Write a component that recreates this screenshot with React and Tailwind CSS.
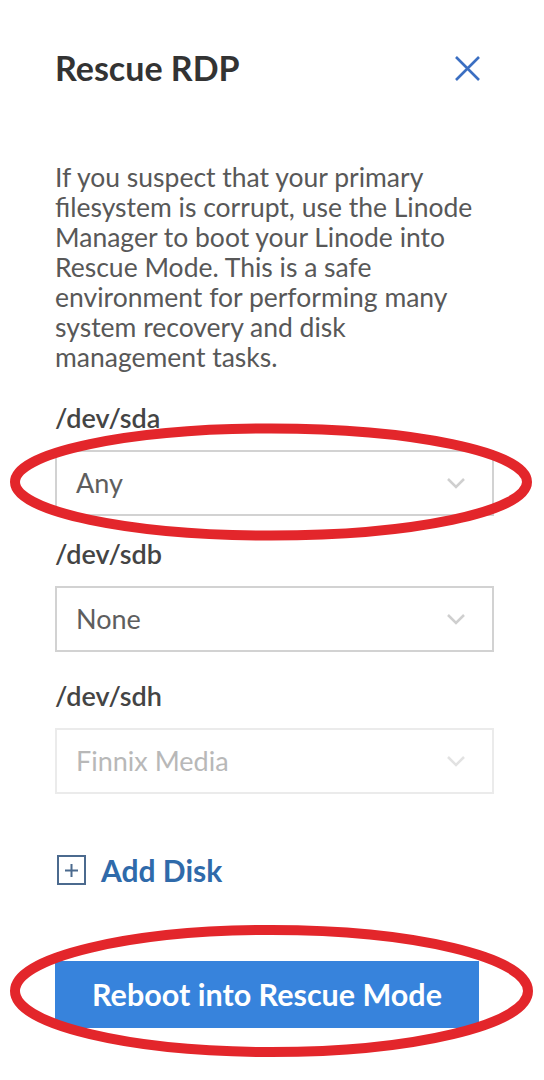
import React from 'react';

const font = { fontFamily: 'Lato, "Open Sans", sans-serif' };

const Chevron = ({ muted }) => (
  <svg width="20" height="12" viewBox="0 0 20 12" fill="none">
    <path d="M2 2l8 8 8-8" stroke={muted ? '#e2e2e2' : '#cfcfcf'} strokeWidth="2.5" />
  </svg>
);

const DiskSelect = ({ label, value, disabled, gap }) => (
  <div className={gap}>
    <div className="text-[27px] leading-[30px] font-semibold text-[#444]">{label}</div>
    <div
      className={`mt-[17px] h-[66px] flex items-center justify-between pl-[19px] pr-[26px] bg-white border-2 ${
        disabled ? 'border-[#ebebeb] text-[#b8b8b8]' : 'border-[#d2d2d2] text-[#5e5e5e]'
      }`}
    >
      <span className="text-[27px]">{value}</span>
      <Chevron muted={disabled} />
    </div>
  </div>
);

export default function App() {
  return (
    <div className="relative w-[544px] h-[1080px] bg-white overflow-hidden" style={font}>
      <div className="pl-[55px] pr-[50px] pt-[48px]">
        <div className="flex items-center justify-between pr-[13px]">
          <h1 className="text-[34px] leading-[40px] font-bold text-[#333]">Rescue RDP</h1>
          <svg width="27" height="27" viewBox="0 0 27 27" fill="none">
            <path d="M2 2l23 23M25 2L2 25" stroke="#3b6fc2" strokeWidth="2.6" />
          </svg>
        </div>

        <p className="mt-[74px] text-[26.5px] leading-[30px] text-[#585858] pr-[9px]">
          If you suspect that your primary filesystem is corrupt, use the Linode Manager to boot your Linode into Rescue Mode. This is a safe environment for performing many system recovery and disk management tasks.
        </p>

        <DiskSelect gap="mt-[31px]" label="/dev/sda" value="Any" />
        <DiskSelect gap="mt-[23px]" label="/dev/sdb" value="None" />
        <DiskSelect gap="mt-[29px]" label="/dev/sdh" value="Finnix Media" disabled />

        <div className="mt-[58px] h-[36px] flex items-center gap-[15px] pl-[2px]">
          <div className="w-[29px] h-[30px] border-2 border-[#4b6a8e] flex items-center justify-center">
            <svg width="15" height="15" viewBox="0 0 15 15">
              <path d="M7.5 1v13M1 7.5h13" stroke="#4b6a8e" strokeWidth="2" />
            </svg>
          </div>
          <span className="text-[30px] font-bold text-[#2f6aaa]">Add Disk</span>
        </div>

        <button className="mt-[73px] w-[424px] h-[67px] bg-[#3783dc] text-white text-[30.5px] font-bold flex items-center justify-center">
          Reboot into Rescue Mode
        </button>
      </div>

      <svg className="absolute inset-0 pointer-events-none" width="544" height="1080" viewBox="0 0 544 1080" fill="none">
        <ellipse cx="271" cy="482" rx="256" ry="53.5" stroke="#e3262b" strokeWidth="10" />
        <ellipse cx="271.5" cy="991" rx="256.5" ry="61" stroke="#e3262b" strokeWidth="10" />
      </svg>
    </div>
  );
}
